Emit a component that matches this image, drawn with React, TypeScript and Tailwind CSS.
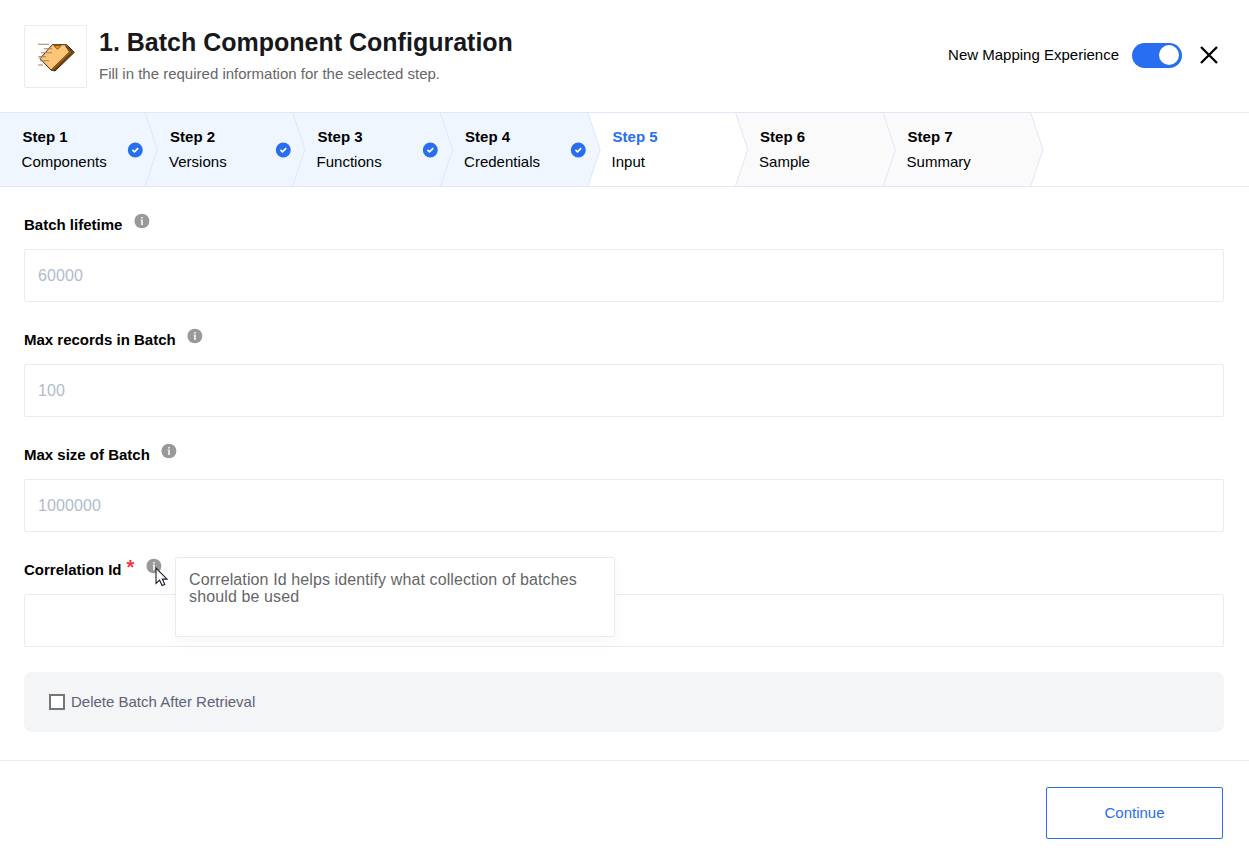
import React from "react";

type StepState = "done" | "active" | "todo";

const steps: { title: string; name: string; state: StepState }[] = [
  { title: "Step 1", name: "Components", state: "done" },
  { title: "Step 2", name: "Versions", state: "done" },
  { title: "Step 3", name: "Functions", state: "done" },
  { title: "Step 4", name: "Credentials", state: "done" },
  { title: "Step 5", name: "Input", state: "active" },
  { title: "Step 6", name: "Sample", state: "todo" },
  { title: "Step 7", name: "Summary", state: "todo" },
];

const fills: Record<StepState, string> = {
  done: "#eff6ff",
  active: "#ffffff",
  todo: "#fafafa",
};

function BatchLogo() {
  return (
    <svg width="40" height="32" viewBox="63 77 120 96" className="shrink-0">
      <path d="M75 130 L112 88 H155 L178 110 L120 167 H110 Z" fill="#ffc576" />
      <path d="M153 88 L178 111 L121 167 L108 165 L164 110 L150 92 Z" fill="#9a570f" />
      <path d="M160 96 L172 111 L117 165" fill="none" stroke="#4d2c0c" strokeWidth="3" />
      <path d="M117 91 H138 L127.5 102 Z" fill="#ff9314" stroke="#6b4010" strokeWidth="2.5" />
      <path
        d="M75 130 L112 88 H155 L178 111 L120 167 L108 164 Z"
        fill="none"
        stroke="#3a2c1c"
        strokeWidth="3"
      />
      <path d="M152 91 L163 110 L109 163" fill="none" stroke="#3a2c1c" strokeWidth="2.2" />
      <path d="M69 87 H102 M87 100 H111 M78 112 H111 M69 124 H93 M75 136 H102 M69 149 H84" stroke="#a08568" strokeWidth="3.2" />
    </svg>
  );
}

function InfoIcon() {
  return (
    <svg width="16" height="16" viewBox="0 0 16 16" className="shrink-0">
      <ellipse cx="7.9" cy="8" rx="7.5" ry="7.3" fill="#999999" />
      <path d="M7 4h2v1.6H7zM6.5 6.6H9V12H7V7.6h-.5z" fill="#e6e6e6" />
    </svg>
  );
}

function CheckBadge() {
  return (
    <svg width="16" height="16" viewBox="0 0 16 16" className="absolute left-[127px] top-[29px]">
      <circle cx="8.3" cy="8" r="7.5" fill="#276ef1" />
      <path d="M5.4 7.9 L7.5 9.9 L11.2 6.2" fill="none" stroke="#fff" strokeWidth="1.7" />
    </svg>
  );
}

function Field({
  label,
  placeholder,
  required,
  children,
}: {
  label: string;
  placeholder?: string;
  required?: boolean;
  children?: React.ReactNode;
}) {
  return (
    <div className="flex h-[115px] flex-col">
      <div className="flex h-[37px] items-start">
        <span className="mt-[3px] text-[15px] font-bold leading-[20px] text-black">{label}</span>
        {required && (
          <span className="ml-[5px] w-[8px] text-[20px] font-bold leading-[20px] text-[#f5333f]">*</span>
        )}
        <span className="relative ml-[11.6px] mt-[1px]">
          <InfoIcon />
          {children}
        </span>
      </div>
      <input
        type="text"
        placeholder={placeholder}
        className="h-[53px] w-full rounded-[2px] border border-[#ebebeb] bg-white px-[13px] text-[16px] tracking-[0.1px] text-black outline-none placeholder:text-[#b0bccb]"
      />
    </div>
  );
}

export default function App() {
  return (
    <div className="h-[863px] w-[1249px] overflow-hidden bg-white font-['Liberation_Sans',Arial,sans-serif] text-black">
      <header className="flex h-[112px] items-start pl-6">
        <div className="mt-[25px] flex h-[63px] w-[63px] items-center justify-center rounded-[2px] border border-[#ebebeb]">
          <BatchLogo />
        </div>
        <div className="ml-3 flex flex-col">
          <h1 className="mt-[27px] whitespace-nowrap text-[25px] font-bold leading-[30px] text-[#17181c]">
            1. Batch Component Configuration
          </h1>
          <p className="mt-[7px] text-[15px] leading-[20px] text-[#666666]">
            Fill in the required information for the selected step.
          </p>
        </div>
        <div className="ml-auto mr-[30px] mt-[42px] flex h-[26px] items-center">
          <span className="whitespace-nowrap text-[15px] leading-[20px]">New Mapping Experience</span>
          <button className="ml-[13px] flex h-[25px] w-[50px] items-center justify-end rounded-full bg-[#276ef1] pr-[3px]">
            <span className="h-5 w-5 rounded-full bg-white" />
          </button>
          <svg width="20" height="20" viewBox="0 0 20 20" className="ml-[17px]">
            <path d="M2 2 L18 18 M18 2 L2 18" stroke="#000" strokeWidth="2.3" fill="none" />
          </svg>
        </div>
      </header>

      <nav className="relative h-[75px] border-y border-[#ebebeb]">
        <svg width="1249" height="75" viewBox="0 0 1249 75" className="absolute left-0 top-[-1px]">
          {steps
            .map((s, i) => ({ s, i }))
            .reverse()
            .map(({ s, i }) => {
              const x = 145 + i * 147.6;
              return (
                <path
                  key={s.title}
                  d={`M0 0.5 H${x} L${x + 12.4} 37.5 L${x} 74.5 H0`}
                  fill={fills[s.state]}
                  stroke="#dfe6f7"
                  strokeWidth="1"
                />
              );
            })}
        </svg>
        <div className="relative flex">
          {steps.map((s) => (
            <div key={s.title} className="relative h-[73px] w-[147.5px] pl-[21.6px] pt-[14px]">
              <div
                className={
                  s.state === "active"
                    ? "pl-px text-[15px] font-bold leading-[20px] text-[#276ef1]"
                    : "pl-px text-[15px] font-bold leading-[20px] text-black"
                }
              >
                {s.title}
              </div>
              <div className="mt-[5px] text-[15px] leading-[20px]">{s.name}</div>
              {s.state === "done" && <CheckBadge />}
            </div>
          ))}
        </div>
      </nav>

      <main className="h-[573px] px-6 pr-[25px] pt-[25px]">
        <Field label="Batch lifetime" placeholder="60000" />
        <Field label="Max records in Batch" placeholder="100" />
        <Field label="Max size of Batch" placeholder="1000000" />
        <Field label="Correlation Id" required>
          <svg width="14" height="22" viewBox="0 0 14 22" className="absolute left-[9px] top-[9px] z-20">
            <path
              d="M1 1 V16.5 L4.6 13.2 L7.1 18.6 L9.8 17.4 L7.4 12.1 H12 Z"
              fill="#fff"
              stroke="#1b1b2b"
              strokeWidth="1.1"
            />
          </svg>
          <div className="absolute left-[29px] top-[-1px] z-10 h-[80px] w-[440px] rounded-[2px] border border-[#ebebeb] bg-white px-[13px] pt-[13px] text-[16px] leading-[17px] tracking-[0.11px] text-[#666666] shadow-[0_4px_16px_rgba(0,0,0,0.04)]">
            Correlation Id helps identify what collection of batches should be used
          </div>
        </Field>
        <label className="flex h-[60px] items-center rounded-lg bg-[#f4f5f7] pl-[25px]">
          <span className="h-4 w-4 border-2 border-[#767676] bg-white" />
          <span className="ml-[6px] text-[15px] leading-[20px] text-[#5e6278]">Delete Batch After Retrieval</span>
        </label>
      </main>

      <footer className="flex h-[103px] justify-end border-t border-[#ebebeb] pr-[26px] pt-[26px]">
        <button className="h-[52px] w-[177px] rounded-[2px] border border-[#276ef1] text-[15px] text-[#276ef1]">
          Continue
        </button>
      </footer>
    </div>
  );
}
